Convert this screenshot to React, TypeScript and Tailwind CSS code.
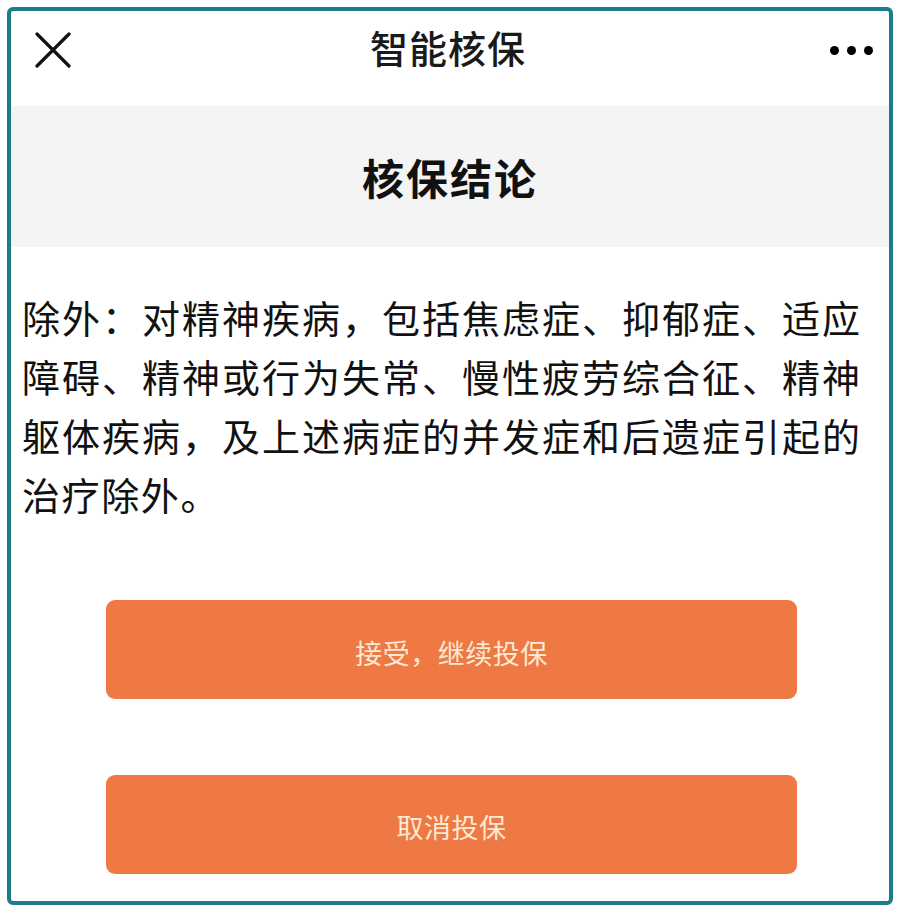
import React from "react";

const font = { fontFamily: '"Noto Sans CJK SC", "Noto Sans", sans-serif' };

const lines = [
  "除外：对精神疾病，包括焦虑症、抑郁症、适应",
  "障碍、精神或行为失常、慢性疲劳综合征、精神",
  "躯体疾病，及上述病症的并发症和后遗症引起的",
];

export default function App() {
  return (
    <div className="w-[900px] h-[911px] bg-white p-[7px]" style={font}>
      <div className="h-[898px] border-4 border-[#1d7c89] rounded-[6px] flex flex-col overflow-hidden bg-white">
        {/* header */}
        <div className="h-[95px] relative flex justify-center pt-[14px] shrink-0">
          <div className="absolute left-[24px] top-[21px] w-[36px] h-[36px]">
            <svg viewBox="0 0 36 36" width="36" height="36">
              <path d="M2 2 L34 34 M34 2 L2 34" stroke="#111" strokeWidth="3.2" strokeLinecap="round" />
            </svg>
          </div>
          <div className="text-[38px] leading-[44px] font-medium text-[#1a1a1a] tracking-[1px] ml-[-4px]">智能核保</div>
          <div className="absolute right-[16px] top-[35px] flex gap-[8px]">
            <span className="w-[9px] h-[9px] rounded-full bg-black" />
            <span className="w-[9px] h-[9px] rounded-full bg-black" />
            <span className="w-[9px] h-[9px] rounded-full bg-black" />
          </div>
        </div>
        {/* conclusion band */}
        <div className="h-[141px] bg-[#f4f4f4] flex items-center justify-center shrink-0">
          <div className="text-[42px] font-bold text-[#111] tracking-[2px]">核保结论</div>
        </div>
        {/* body */}
        <div className="pl-[11px] pt-[40px] text-[38px] leading-[59px] text-[#111]">
          {lines.map((l) => (
            <div key={l} className="w-[838px] whitespace-nowrap text-justify [text-align-last:justify]">
              {l}
            </div>
          ))}
          <div className="tracking-[1.6px]">治疗除外。</div>
        </div>
        <div className="flex flex-col items-center gap-[76px] mt-[77px]">
          <button className="w-[691px] h-[99px] ml-[3px] pt-[8px] rounded-[9px] bg-[#ef7944] text-[#fde9d3] text-[27px] tracking-[0.5px]">
            接受，继续投保
          </button>
          <button className="w-[691px] h-[99px] ml-[3px] pt-[6px] rounded-[9px] bg-[#ef7944] text-[#fde9d3] text-[27px] tracking-[0.5px]">
            取消投保
          </button>
        </div>
      </div>
    </div>
  );
}
